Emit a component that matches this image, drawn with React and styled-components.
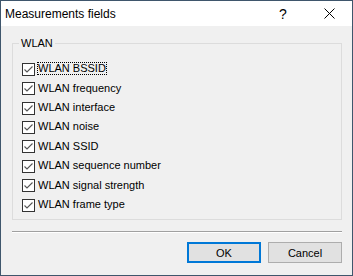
import React from "react";
import styled, { createGlobalStyle } from "styled-components";

const Global = createGlobalStyle`
  html, body { margin: 0; padding: 0; background: #f0f0f0; }
  * { box-sizing: border-box; }
`;

const Window = styled.div`
  width: 353px;
  height: 276px;
  border: 1px solid #3f566c;
  background: #f0f0f0;
  display: flex;
  flex-direction: column;
  font-family: "Liberation Sans", Arial, sans-serif;
  color: #000;
`;

const TitleBar = styled.div`
  height: 25px;
  background: #fff;
  display: flex;
  align-items: center;
  flex: none;
`;

const Title = styled.div`
  flex: 1;
  padding-left: 4px;
  font-size: 12px;
  line-height: 14px;
  padding-top: 1px;
`;

const CaptionButton = styled.div`
  width: 46px;
  height: 25px;
  display: flex;
  align-items: center;
  justify-content: center;
  font-size: 14px;
  color: #000;
`;

const Body = styled.div`
  flex: 1;
  display: flex;
  flex-direction: column;
  padding: 11px 10px 11px 11px;
`;

const Group = styled.fieldset`
  margin: 0;
  border: 1px solid #dcdcdc;
  padding: 10px 9px 5px 9px;
  display: flex;
  flex-direction: column;
  min-width: 0;
`;

const Legend = styled.legend`
  font-size: 11px;
  line-height: 12px;
  padding: 0 2px;
  margin-left: -3px;
`;

const Row = styled.div`
  height: 19.43px;
  display: flex;
  align-items: center;
`;

const Box = styled.span`
  width: 13px;
  height: 13px;
  border: 1px solid #333;
  background: #fff;
  display: flex;
  align-items: center;
  justify-content: center;
  flex: none;
  margin-top: 1px;
`;

const Label = styled.span`
  margin-left: 2px;
  font-size: 11px;
  line-height: 11px;
  border: 1px dotted ${(p) => (p.$focus ? "#000" : "transparent")};
  padding: 0;
  white-space: nowrap;
`;

const Separator = styled.div`
  margin-top: 11px;
  height: 2px;
  border-top: 1px solid #a0a0a0;
  border-bottom: 1px solid #fff;
`;

const Buttons = styled.div`
  margin-top: 9px;
  display: flex;
  justify-content: flex-end;
  gap: 7px;
`;

const Button = styled.button`
  width: 74px;
  height: 21px;
  padding: 0;
  font-family: "Liberation Sans", Arial, sans-serif;
  font-size: 11px;
  color: #000;
  background: #e1e1e1;
  border: ${(p) => (p.$default ? "2px solid #0078d7" : "1px solid #adadad")};
  border-radius: 0;
`;

const Check = () => (
  <svg width="11" height="11" viewBox="0 0 11 11">
    <polyline
      points="1.5,5.5 4,8 9.5,2.5"
      fill="none"
      stroke="#555"
      strokeWidth="1.1"
    />
  </svg>
);

const items = [
  "WLAN BSSID",
  "WLAN frequency",
  "WLAN interface",
  "WLAN noise",
  "WLAN SSID",
  "WLAN sequence number",
  "WLAN signal strength",
  "WLAN frame type",
];

export default function App() {
  return (
    <>
      <Global />
      <Window>
        <TitleBar>
          <Title>Measurements fields</Title>
          <CaptionButton>?</CaptionButton>
          <CaptionButton>
            <svg width="11" height="11" viewBox="0 0 11 11">
              <path d="M0.5 0.5 L10.5 10.5 M10.5 0.5 L0.5 10.5" stroke="#000" strokeWidth="1" fill="none" />
            </svg>
          </CaptionButton>
        </TitleBar>
        <Body>
          <Group>
            <Legend>WLAN</Legend>
            {items.map((t, i) => (
              <Row key={t}>
                <Box>
                  <Check />
                </Box>
                <Label $focus={i === 0}>{t}</Label>
              </Row>
            ))}
          </Group>
          <Separator />
          <Buttons>
            <Button $default>OK</Button>
            <Button>Cancel</Button>
          </Buttons>
        </Body>
      </Window>
    </>
  );
}
